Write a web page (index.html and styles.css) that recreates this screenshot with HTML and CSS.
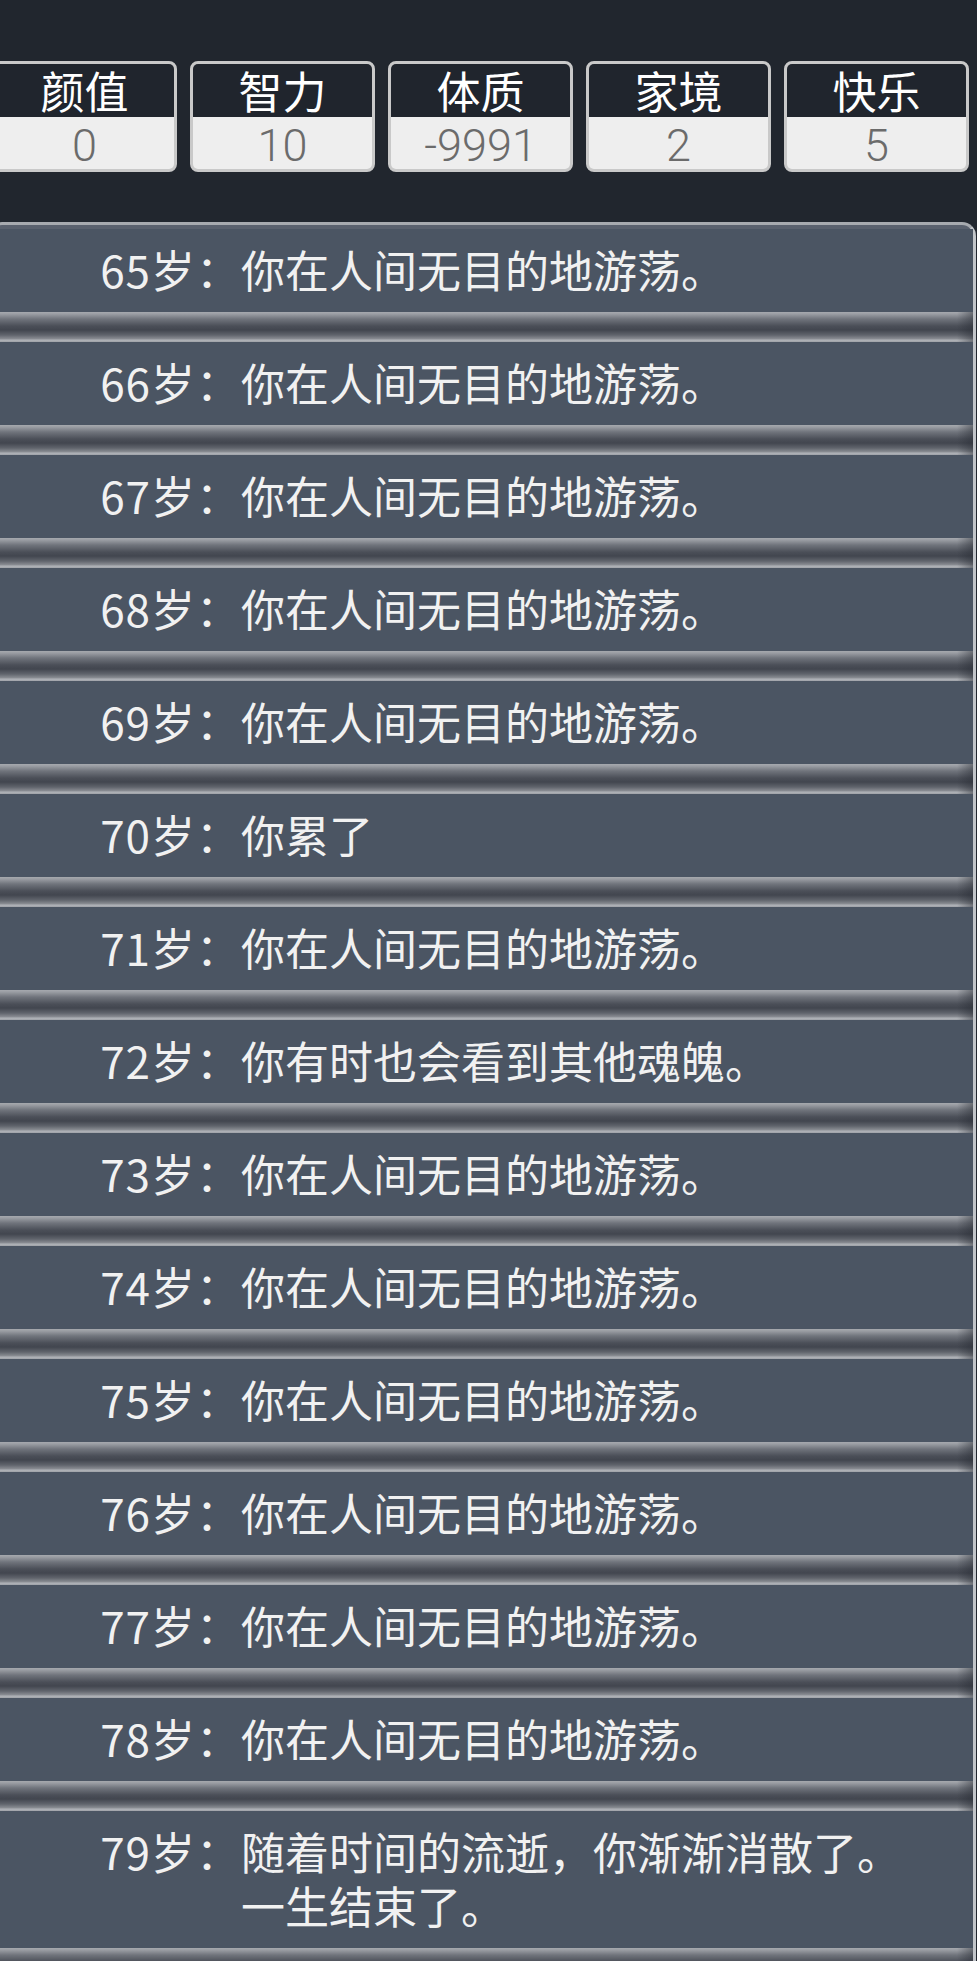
FILE: index.html
```html
<!DOCTYPE html>
<html lang="zh-CN">
<head>
    <meta charset="UTF-8">
    <meta name="viewport" content="width=device-width, initial-scale=1.0">
    <title>人生重开模拟器</title>
    <link rel="stylesheet" href="styles.css">
</head>
<body>
    <div class="stats">
        <div class="stat">
            <div class="stat-name">颜值</div>
            <div class="stat-value">0</div>
        </div>
        <div class="stat">
            <div class="stat-name">智力</div>
            <div class="stat-value">10</div>
        </div>
        <div class="stat">
            <div class="stat-name">体质</div>
            <div class="stat-value">-9991</div>
        </div>
        <div class="stat">
            <div class="stat-name">家境</div>
            <div class="stat-value">2</div>
        </div>
        <div class="stat">
            <div class="stat-name">快乐</div>
            <div class="stat-value">5</div>
        </div>
    </div>

    <ul class="trajectory">
        <li><span class="age">65岁：</span><span class="event">你在人间无目的地游荡。</span></li>
        <li><span class="age">66岁：</span><span class="event">你在人间无目的地游荡。</span></li>
        <li><span class="age">67岁：</span><span class="event">你在人间无目的地游荡。</span></li>
        <li><span class="age">68岁：</span><span class="event">你在人间无目的地游荡。</span></li>
        <li><span class="age">69岁：</span><span class="event">你在人间无目的地游荡。</span></li>
        <li><span class="age">70岁：</span><span class="event">你累了</span></li>
        <li><span class="age">71岁：</span><span class="event">你在人间无目的地游荡。</span></li>
        <li><span class="age">72岁：</span><span class="event">你有时也会看到其他魂魄。</span></li>
        <li><span class="age">73岁：</span><span class="event">你在人间无目的地游荡。</span></li>
        <li><span class="age">74岁：</span><span class="event">你在人间无目的地游荡。</span></li>
        <li><span class="age">75岁：</span><span class="event">你在人间无目的地游荡。</span></li>
        <li><span class="age">76岁：</span><span class="event">你在人间无目的地游荡。</span></li>
        <li><span class="age">77岁：</span><span class="event">你在人间无目的地游荡。</span></li>
        <li><span class="age">78岁：</span><span class="event">你在人间无目的地游荡。</span></li>
        <li><span class="age">79岁：</span><span class="event">随着时间的流逝，你渐渐消散了。<br>一生结束了。</span></li>
    </ul>
</body>
</html>
```

FILE: styles.css
```css
body {
    margin: 0;
    background: #21262e;
    font-family: "Noto Sans CJK SC", "Noto Sans", sans-serif;
    overflow: hidden;
}

.stats {
    display: flex;
    gap: 13px;
    width: 977px;
    margin: 61px 0 0 -8px;
}

.stat {
    flex: 1;
    border: 3px solid #c9c9c9;
    border-radius: 8px;
    background: #c9c9c9;
    text-align: center;
}

.stat-name {
    background: #20252d;
    color: #fff;
    font-size: 44px;
    line-height: 53px;
    border-radius: 5px 5px 0 0;
}

.stat-value {
    background: #eeeeee;
    color: #6b6b6b;
    font-family: Roboto, "Noto Sans", sans-serif;
    font-weight: 300;
    font-size: 45px;
    line-height: 47px;
    padding-top: 5px;
    border-radius: 0 0 5px 5px;
}

.trajectory {
    list-style: none;
    margin: 50px 1px 0 -12px;
    padding: 4px 0 0 0;
    background: #5a616e;
    border: 3px solid #a7aaaf;
    border-right-color: #c2c5c9;
    border-bottom: none;
    border-radius: 14px 14px 0 0;
}

.trajectory li {
    display: grid;
    grid-template-columns: 250px 1fr;
    padding: 13px 0 16px 0;
    font-size: 44px;
    line-height: 54px;
    color: #f1f1f1;
    border-bottom: 30px solid transparent;
    background:
        linear-gradient(to right, transparent calc(100% - 16px), rgba(35, 39, 47, 0.45)) bottom / 100% 30px no-repeat border-box,
        linear-gradient(to bottom, #a6a9ae 0, #9a9da3 2px, #70747c 7px, #4b4f58 14px, #42464f 18px, #60646c 23px, #8b8e94 27px, #b1b4b9 28px, #9fa2a8 30px) bottom / 100% 30px no-repeat border-box,
        linear-gradient(#4b5563, #4b5563) padding-box;
}

.age {
    text-align: right;
    letter-spacing: 1px;
}
```
